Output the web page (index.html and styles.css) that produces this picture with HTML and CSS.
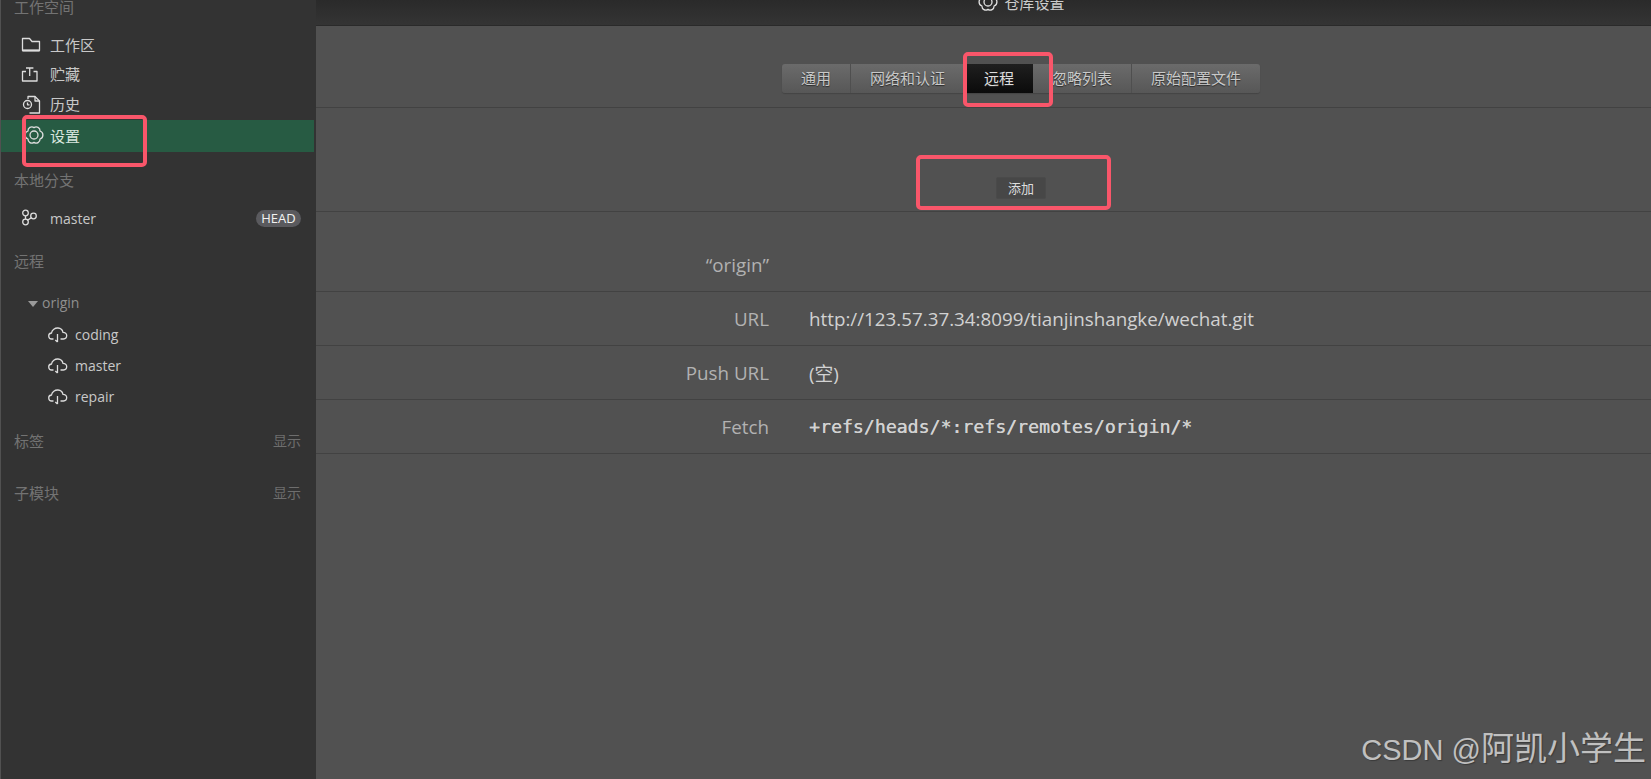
FILE: index.html
```html
<!DOCTYPE html>
<html lang="zh">
<head>
<meta charset="utf-8">
<title>仓库设置</title>
<link rel="stylesheet" href="styles.css">
</head>
<body>
<div class="app">
  <aside class="sidebar">
    <div class="title first">工作空间</div>
    <nav class="nav">
      <div class="item"><svg class="ico" viewBox="0 0 22 20"><path d="M1.500 15.500V3.500h7l2.500 3h7.500v9z"/><path d="M1.500 15.500h17" class="thick"/></svg><span>工作区</span></div>
      <div class="item"><svg class="ico" viewBox="0 0 22 20"><path d="M5 6.500H1.500v9.500h14.500V6.500H12.500"/><path d="M8.700 11V3M5 3h7.400"/></svg><span class="up">贮藏</span></div>
      <div class="item"><svg class="ico" viewBox="0 0 22 20"><path d="M7 4V1.500h7l4.500 4.500v12H8.500"/><path d="M14 1.500V6h4.500"/><circle cx="6.500" cy="9.500" r="4"/><path d="M6.500 7.500v2.300h2"/></svg><span class="up">历史</span></div>
      <div class="item active"><svg class="ico" viewBox="0 0 22 20"><g transform="translate(13 9)"><path d="M0 -7.400A3.800 3.800 0 0 1 6 -4A4.200 4.200 0 0 1 6 4A3.800 3.800 0 0 1 0 7.400A3.800 3.800 0 0 1 -6 4A4.200 4.200 0 0 1 -6 -4A3.800 3.800 0 0 1 0 -7.400Z"/><circle r="4"/></g></svg><span>设置</span></div>
    </nav>
    <div class="title local">本地分支</div>
    <div class="item branch"><svg class="ico" viewBox="0 0 22 20"><circle cx="4.500" cy="5" r="2.800"/><circle cx="4.500" cy="14" r="2.800"/><circle cx="12.500" cy="8" r="2.800"/><path d="M4.500 7.800v3.400M6.500 12.200l4-2.600"/></svg><span>master</span><b class="head">HEAD</b></div>
    <div class="title remote">远程</div>
    <div class="origin"><i class="tri"></i><span>origin</span></div>
    <div class="sub"><svg class="cloud" viewBox="0 0 20 16"><path d="M5.500 12H4a3 3 0 0 1-.5-6C4 2.800 7 .8 10 1c2.500.2 4.500 2 5 4.300 2 0 3.700 1.500 3.700 3.300 0 1.900-1.400 3.400-3.200 3.400H12.500"/><path d="M9.500 7v8M7.300 13l2.200 2"/></svg><span>coding</span></div>
    <div class="sub"><svg class="cloud" viewBox="0 0 20 16"><path d="M5.500 12H4a3 3 0 0 1-.5-6C4 2.800 7 .8 10 1c2.500.2 4.500 2 5 4.300 2 0 3.700 1.500 3.700 3.300 0 1.900-1.400 3.400-3.200 3.400H12.500"/><path d="M9.500 7v8M7.300 13l2.200 2"/></svg><span>master</span></div>
    <div class="sub"><svg class="cloud" viewBox="0 0 20 16"><path d="M5.500 12H4a3 3 0 0 1-.5-6C4 2.800 7 .8 10 1c2.500.2 4.500 2 5 4.300 2 0 3.700 1.500 3.700 3.300 0 1.900-1.400 3.400-3.200 3.400H12.500"/><path d="M9.500 7v8M7.300 13l2.200 2"/></svg><span>repair</span></div>
    <div class="title tags"><span>标签</span><em>显示</em></div>
    <div class="title mods"><span>子模块</span><em>显示</em></div>
  </aside>
  <main class="main">
    <header class="header">
      <div class="htitle"><svg class="hgear" viewBox="0 0 20 20"><g transform="translate(10 10)"><path d="M0 -7.400A3.800 3.800 0 0 1 6 -4A4.200 4.200 0 0 1 6 4A3.800 3.800 0 0 1 0 7.400A3.800 3.800 0 0 1 -6 4A4.200 4.200 0 0 1 -6 -4A3.800 3.800 0 0 1 0 -7.400Z"/><circle r="4"/></g></svg><span>仓库设置</span></div>
    </header>
    <section class="tabbar">
      <div class="tabs">
        <div class="tab">通用</div>
        <div class="tab">网络和认证</div>
        <div class="tab on">远程</div>
        <div class="tab">忽略列表</div>
        <div class="tab">原始配置文件</div>
      </div>
    </section>
    <section class="addbar"><button class="add">添加</button></section>
    <div class="row first-row"><label>“origin”</label></div>
    <div class="row"><label>URL</label><div class="val">http://123.57.37.34:8099/tianjinshangke/wechat.git</div></div>
    <div class="row"><label>Push URL</label><div class="val">(空)</div></div>
    <div class="row"><label>Fetch</label><div class="val mono">+refs/heads/*:refs/remotes/origin/*</div></div>
  </main>
  <div class="mark m1"></div>
  <div class="mark m2"></div>
  <div class="mark m3"></div>
  <div class="wm">CSDN @<span>阿凯小学生</span></div>
</div>
</body>
</html>
```
FILE: styles.css
```css
* { box-sizing: border-box; }
html, body { margin: 0; height: 100%; overflow: hidden; }
body { background: #515151; font-family: "Open Sans", "Noto Sans CJK SC", sans-serif; }
.app { position: relative; display: flex; width: 1651px; height: 779px; overflow: hidden; }

.sidebar { width: 315px; flex: none; margin-left: 1px; background: #333; color: #c8c8c8; font-size: 15px; }
.title { display: flex; justify-content: space-between; align-items: center; height: 20px; padding: 0 15px 4px 13px; color: #737373; font-size: 15px; }
.title em { font-style: normal; color: #6e6e6e; font-size: 14px; }
.title.first { height: 14px; line-height: 14px; padding-bottom: 0; }
.title.local { margin-top: 19px; }
.title.remote { margin-top: 19px; }
.title.tags { margin-top: 20px; }
.title.mods { margin-top: 32px; }
.nav { margin-top: 16px; }
.item { display: flex; align-items: center; height: 30px; padding-left: 20px; }
.item span { margin-left: 7px; padding-bottom: 2px; }
.item span.up { padding-bottom: 4px; }
.ico { width: 22px; height: 20px; overflow: visible; fill: none; stroke: #ddd; stroke-width: 1.300; stroke-linejoin: round; }
.thick { stroke-width: 2; }
.item.active { height: 32px; background: #275b43; margin-right: 2px; color: #d8e6de; }
.item.branch { margin-top: 12px; }
.item.branch span { padding-bottom: 0; font-size: 14px; }
.head { margin-left: auto; margin-right: 15px; width: 45px; height: 17px; border-radius: 9px; background: #5a5a5e; color: #f2f2f2; font-size: 13px; font-weight: 400; line-height: 17px; text-align: center; }
.origin { display: flex; align-items: center; height: 31px; margin-top: 16px; padding-left: 27px; color: #8f8f8f; font-size: 14px; }
.origin span { padding-bottom: 2px; }
.tri { width: 0; height: 0; margin-right: 4px; border: 5px solid transparent; border-top: 6px solid #9a9a9a; border-bottom: 0; }
.sub { display: flex; align-items: center; height: 31px; padding-left: 47px; font-size: 14px; }
.sub span { margin-left: 7px; }
.cloud { width: 20px; height: 16px; fill: none; stroke: #ddd; stroke-width: 1.300; }

.main { flex: 1; min-width: 0; color: #c8c8c8; }
.header { height: 26px; padding-left: 76px; background: linear-gradient(#2a2a2a, #343434); border-bottom: 1px solid #2a2a2a; display: flex; justify-content: center; overflow: hidden; }
.htitle { display: flex; align-items: center; height: 20px; margin-top: -8px; font-size: 15px; color: #ccc; }
.hgear { width: 20px; height: 20px; margin-right: 6px; fill: none; stroke: #e0e0e0; stroke-width: 1.300; stroke-linejoin: round; }

.tabbar { display: flex; justify-content: center; padding: 38px 0 14px 75px; border-bottom: 1px solid #424242; }
.tabs { display: flex; height: 29px; border-radius: 3px; background: linear-gradient(#6b6b6b, #575757); box-shadow: 0 1px 1px #444; }
.tab { padding: 0 19px; border-right: 1px solid #4f4f4f; font-size: 15px; line-height: 29px; color: #c9c9c9; text-shadow: 0 1px 1px #2b2b2b; }
.tab:last-child { border-right: 0; }
.tab.on { background: linear-gradient(#1f1f1f, #0b0b0b); color: #ddd; border-right: 0; }
.addbar { display: flex; justify-content: center; padding: 69px 0 12px 75px; border-bottom: 1px solid #424242; }
.add { width: 50px; height: 22px; padding: 0 0 6px; border: 1px solid #4a4a4a; border-radius: 2px; background: #474747; color: #ddd; font: 13px "Noto Sans CJK SC", sans-serif; }

.row { display: flex; align-items: center; height: 54px; border-bottom: 1px solid #424242; font-size: 18.800px; }
.row.first-row { height: 80px; padding-top: 26px; }
.row label { width: 453px; flex: none; text-align: right; color: #b2b2b2; }
.val { margin-left: 40px; color: #d2d2d2; }
.val.mono { font-family: "DejaVu Sans Mono", monospace; font-size: 18.200px; text-shadow: 0.3px 0 0 currentColor; }

.mark { position: absolute; border: 4px solid #f9566a; border-radius: 5px; }
.m1 { left: 22px; top: 115px; width: 125px; height: 52px; }
.m2 { left: 963px; top: 52px; width: 90px; height: 55px; }
.m3 { left: 916px; top: 155px; width: 195px; height: 55px; }
.wm { position: absolute; right: 5px; top: 722px; color: #c0c0c0; font: 29px "Liberation Sans", "Noto Sans CJK SC", sans-serif; text-shadow: 1px 1px 1px #3a3a3a; white-space: nowrap; }
.wm span { font-size: 33px; }
```
